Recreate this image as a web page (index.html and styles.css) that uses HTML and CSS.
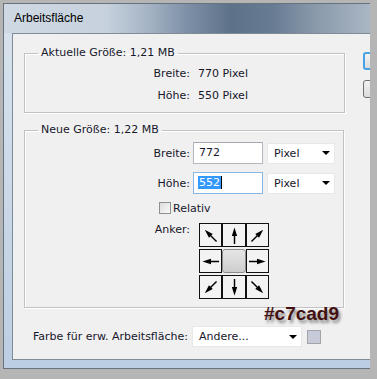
FILE: index.html
```html
<!DOCTYPE html>
<html lang="de">
<head>
<meta charset="UTF-8">
<title>Arbeitsfläche</title>
<link rel="stylesheet" href="styles.css">
</head>
<body>
<svg class="defs" width="0" height="0">
<defs>
<symbol id="arrow" viewBox="0 0 20 20">
<path d="M10 19V8.5" stroke="#000" stroke-width="1.5" fill="none"/>
<path d="M10 1.5L7.2 10.5H12.8Z" fill="#000"/>
</symbol>
</defs>
</svg>
<div class="frame">
<div class="window">
<div class="titlebar">Arbeitsfläche</div>
<div class="dialog">
<div class="main">
<fieldset class="group group-current">
<legend>Aktuelle Größe: 1,21 MB</legend>
<div class="info">
<span class="label">Breite:</span><span>770 Pixel</span>
<span class="label">Höhe:</span><span>550 Pixel</span>
</div>
</fieldset>
<fieldset class="group group-new">
<legend>Neue Größe: 1,22 MB</legend>
<div class="row">
<span class="label">Breite:</span>
<div class="field">772</div>
<div class="dropdown"><span>Pixel</span><span class="caret"></span></div>
</div>
<div class="row">
<span class="label">Höhe:</span>
<div class="field focused"><span class="selected">552</span></div>
<div class="dropdown"><span>Pixel</span><span class="caret"></span></div>
</div>
<div class="check"><span class="box"></span>Relativ</div>
<div class="row anchor-row">
<span class="label">Anker:</span>
<div class="anchor">
<div class="cell"><svg class="arr r-nw"><use href="#arrow"/></svg></div>
<div class="cell"><svg class="arr"><use href="#arrow"/></svg></div>
<div class="cell"><svg class="arr r-ne"><use href="#arrow"/></svg></div>
<div class="cell"><svg class="arr r-w"><use href="#arrow"/></svg></div>
<div class="cell center"></div>
<div class="cell"><svg class="arr r-e"><use href="#arrow"/></svg></div>
<div class="cell"><svg class="arr r-sw"><use href="#arrow"/></svg></div>
<div class="cell"><svg class="arr r-s"><use href="#arrow"/></svg></div>
<div class="cell"><svg class="arr r-se"><use href="#arrow"/></svg></div>
</div>
</div>
</fieldset>
<div class="row bottom-row">
<span class="label-wide">Farbe für erw. Arbeitsfläche:</span>
<div class="dropdown wide"><span>Andere...</span><span class="caret"></span></div>
<span class="swatch"></span>
</div>
</div>
<div class="buttons">
<button class="btn default" aria-label="OK"></button>
<button class="btn" aria-label="Abbrechen"></button>
</div>
</div>
</div>
<div class="note">#c7cad9</div>
</div>
</body>
</html>
```

FILE: styles.css
```css
body {
margin: 0;
overflow: hidden;
}
.defs {
position: absolute;
}
.frame {
position: relative;
width: 377px;
height: 379px;
box-sizing: border-box;
padding: 3px 7px 10px 3px;
background-color: #b5b5b5;
font-family: "DejaVu Sans", sans-serif;
font-size: 11px;
color: #17172c;
}
.window {
height: 100%;
box-sizing: border-box;
display: flex;
flex-direction: column;
border: 1px solid #69727d;
border-right: none;
padding: 0 0 8px 8px;
background: linear-gradient(#d9e3ee, #bccee2);
}
.titlebar {
height: 29px;
line-height: 29px;
margin-left: -8px;
padding-left: 10px;
font-family: "Liberation Sans", sans-serif;
font-size: 12px;
color: #000;
background: linear-gradient(to right, #cfd9e4 0%, #c6d1dd 28%, #a3b2c3 40%, #7d90a6 50%, #5d7189 62%, #687c94 74%, #8797a9 84%, #a9b6c4 100%);
}
.dialog {
flex: 1;
display: flex;
overflow: hidden;
border: 1px solid #818b97;
border-right: none;
background-color: #f0f0f0;
}
.main {
width: 350px;
flex-shrink: 0;
}
.group {
box-sizing: border-box;
width: 321px;
margin: 12px 0 0 11px;
padding: 3px 0 5px 13px;
border: 1px solid #c2c2c2;
box-shadow: inset 1px 1px 0 #fff, 1px 1px 0 #fff;
min-inline-size: 0;
}
.group legend {
padding: 0 3px;
line-height: 14px;
}
.group-new {
width: 320px;
margin-top: 10px;
padding: 5px 0 8px 13px;
}
.info {
display: grid;
grid-template-columns: 152px auto;
column-gap: 8px;
line-height: 22px;
}
.label {
text-align: right;
}
.row {
display: flex;
align-items: center;
height: 22px;
}
.row + .row {
margin-top: 8px;
}
.row .label {
width: 152px;
flex-shrink: 0;
}
.field {
box-sizing: border-box;
width: 70px;
height: 22px;
margin-left: 3px;
padding-left: 5px;
line-height: 20px;
background-color: #fff;
border: 1px solid #b3b6bd;
border-top-color: #a4a7ae;
}
.field.focused {
padding-left: 4px;
border-color: #86b6e6;
}
.selected {
padding: 0 1px;
background-color: #3399ff;
color: #fff;
border-right: 1px solid #000;
}
.dropdown {
box-sizing: border-box;
width: 68px;
height: 21px;
margin-left: 4px;
padding: 0 4px 0 6px;
display: flex;
align-items: center;
justify-content: space-between;
background-color: #fff;
border: 1px solid #e8e8e8;
}
.caret {
width: 0;
height: 0;
border-left: 4px solid transparent;
border-right: 4px solid transparent;
border-top: 4px solid #000;
}
.check {
display: flex;
align-items: center;
height: 14px;
margin: 7px 0 0 121px;
}
.box {
box-sizing: border-box;
width: 12px;
height: 12px;
margin-right: 2px;
border: 1px solid #8e8f8f;
background: linear-gradient(135deg, #dcdcdc, #fbfbfb);
}
.anchor-row {
align-items: flex-start;
height: auto;
margin-top: 8px;
}
.anchor-row .label {
line-height: 14px;
}
.anchor {
display: grid;
grid-template-columns: 23px 24px 23px;
grid-template-rows: repeat(3, 24px);
row-gap: 2px;
margin-left: 9px;
}
.cell {
box-sizing: border-box;
border: 1px solid #111;
background-color: #f3f3f3;
display: flex;
align-items: center;
justify-content: center;
}
.cell.center {
border: 1px solid #8c8c8c;
border-radius: 3px;
background: linear-gradient(#e6e6e6, #cdcdcd);
}
.arr {
width: 19px;
height: 19px;
}
.r-nw { transform: rotate(-45deg); }
.r-ne { transform: rotate(45deg); }
.r-e { transform: rotate(90deg); }
.r-se { transform: rotate(135deg); }
.r-s { transform: rotate(180deg); }
.r-sw { transform: rotate(-135deg); }
.r-w { transform: rotate(-90deg); }
.bottom-row {
height: 21px;
margin: 18px 0 0 20px;
}
.dropdown.wide {
width: 110px;
margin-left: 4px;
}
.swatch {
box-sizing: border-box;
width: 14px;
height: 14px;
margin-left: 5px;
background-color: #c7cad9;
border: 1px solid #a3a3a8;
}
.buttons {
display: flex;
flex-direction: column;
gap: 10px;
padding-top: 18px;
}
.btn {
width: 80px;
height: 18px;
flex-shrink: 0;
border: 1px solid #707070;
border-radius: 3px;
background: linear-gradient(#f2f2f2, #dcdcdc);
}
.btn.default {
border: 2px solid #4aa2e6;
}
.note {
position: absolute;
left: 264px;
top: 304px;
line-height: 20px;
font-family: "Liberation Sans", sans-serif;
font-size: 19px;
font-weight: bold;
color: #421010;
text-shadow: 2px 3px 3px #8a8a8a;
}
```
